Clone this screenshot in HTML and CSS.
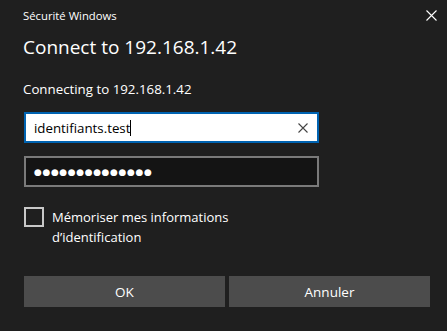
FILE: index.html
```html
<!DOCTYPE html>
<html lang="fr">
<head>
<meta charset="utf-8">
<link rel="stylesheet" href="styles.css">
</head>
<body>
<div class="dialog">
  <div class="titlebar">
    <span class="app">Sécurité Windows</span>
    <svg class="close" width="11" height="11" viewBox="0 0 11 11"><path d="M0.5 0.5L10.5 10.5M10.5 0.5L0.5 10.5" stroke="#fff" stroke-width="1.1"/></svg>
  </div>
  <h1 class="heading">Connect to 192.168.1.42</h1>
  <p class="sub">Connecting to 192.168.1.42</p>
  <div class="field field-active">
    <span class="value">identifiants.test</span><span class="caret"></span>
    <svg class="clear" width="10" height="10" viewBox="0 0 10 10"><path d="M0.5 0.5L9.5 9.5M9.5 0.5L0.5 9.5" stroke="#444" stroke-width="1.1"/></svg>
  </div>
  <div class="field field-pass">
    <span class="dots">●●●●●●●●●●●●●●</span>
  </div>
  <div class="remember">
    <span class="box"></span>
    <span class="label">Mémoriser mes informations<br>d’identification</span>
  </div>
  <div class="buttons">
    <button class="btn">OK</button>
    <button class="btn">Annuler</button>
  </div>
</div>
</body>
</html>
```
FILE: styles.css
```css
html, body {
  margin: 0;
  padding: 0;
  background: #1f1f1f;
}
.dialog {
  width: 447px;
  height: 331px;
  box-sizing: border-box;
  padding: 0 17px 0 24px;
  font-family: "Open Sans", "Noto Sans", sans-serif;
  color: #fff;
  display: flex;
  flex-direction: column;
}
.titlebar {
  display: flex;
  justify-content: space-between;
  align-items: center;
  height: 30px;
}
.app {
  font-size: 11.3px;
  margin-left: -1px;
}
.close {
  margin-right: -7px;
}
.heading {
  margin: 4px 0 0 -1px;
  font-weight: 400;
  font-size: 19px;
  line-height: 26px;
}
.sub {
  margin: 20px 0 0 -1px;
  font-size: 13.3px;
  line-height: 18px;
}
.field {
  width: 295px;
  height: 31px;
  box-sizing: border-box;
  display: flex;
  align-items: center;
  padding: 0 8px;
  margin-top: 14px;
}
.field-active {
  background: #fff;
  border: 2px solid #0063b1;
  color: #000;
  font-size: 13.3px;
}
.caret {
  width: 1px;
  height: 16px;
  background: #000;
}
.clear {
  margin-left: auto;
  margin-right: 1px;
}
.field-pass {
  margin-top: 13px;
  background: #141414;
  border: 2px solid #7a7a7a;
}
.dots {
  font-size: 9px;
  letter-spacing: 0.6px;
  font-family: "DejaVu Sans", sans-serif;
}
.remember {
  display: flex;
  align-items: flex-start;
  margin-top: 20px;
}
.box {
  width: 20px;
  height: 20px;
  box-sizing: border-box;
  border: 2px solid #c8c8c8;
  flex: none;
}
.label {
  margin-left: 8px;
  font-size: 13px;
  line-height: 20px;
}
.buttons {
  display: flex;
  gap: 4px;
  margin-top: 29px;
}
.btn {
  width: 201px;
  height: 31px;
  border: none;
  background: #4c4c4c;
  color: #fff;
  font-family: "Open Sans", "Noto Sans", sans-serif;
  font-size: 13.5px;
  padding: 0;
}
```
